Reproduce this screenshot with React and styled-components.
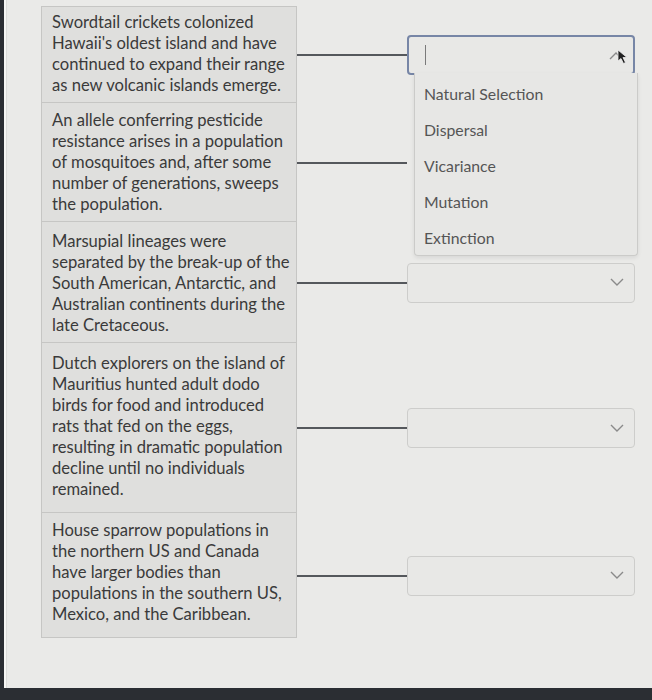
import React from 'react';
import styled, {createGlobalStyle} from 'styled-components';

const GlobalStyle = createGlobalStyle`
  html, body {
    margin: 0;
    padding: 0;
    background: #2b2e33;
  }
  body {
    font-family: Lato, "Open Sans", sans-serif;
  }
`

const Screen = styled.div`
  width: 652px;
  height: 700px;
  display: flex;
  flex-direction: column;
  overflow: hidden;
`

const Sheet = styled.div`
  flex: 1;
  background: #eaeae8;
  border-left: 2px solid #f6f6f4;
  margin-left: 4px;
  padding: 7px 0 0 35px;
  box-shadow: inset 1px 0 0 #dcdcda;
`

const Footer = styled.div`
  height: 12px;
  background: #2b2e33;
`

const Rows = styled.div`
  display: flex;
  flex-direction: column;
`

const Row = styled.div`
  display: flex;
  align-items: center;
  position: relative;
  z-index: ${p => p.$open ? 2 : 1};
`

const Card = styled.div`
  width: 256px;
  box-sizing: border-box;
  padding: ${p => p.$pad || '8px 6px 9px 10px'};
  background: #dfdfdd;
  border: 1px solid #c6c6c4;
  margin-top: -1px;
  color: #3a3a3a;
  font-size: 16.6px;
  line-height: 21px;
`

const Connector = styled.div`
  width: 110px;
  height: 2px;
  background: #55585c;
`

const SelectBox = styled.div`
  position: relative;
  width: 228px;
  height: 40px;
  box-sizing: border-box;
  border: ${p => p.$open ? '2px solid #7786a6' : '1px solid #cdcdcb'};
  border-radius: 4px;
  background: #e8e8e6;
  display: flex;
  align-items: center;
  justify-content: space-between;
  padding: 0 10px 0 16px;
`

const TextCursor = styled.span`
  display: block;
  width: 1px;
  height: 20px;
  background: #7a7a7a;
`

const Menu = styled.ul`
  position: absolute;
  top: 100%;
  left: 5px;
  right: -5px;
  margin: 0;
  padding: 2px 0 0;
  list-style: none;
  background: #e7e7e5;
  border: 1px solid #cbcbc9;
  border-top: none;
  border-radius: 0 0 4px 4px;
  box-shadow: 0 2px 4px rgba(0, 0, 0, 0.08);
`

const MenuItem = styled.li`
  height: 36px;
  display: flex;
  align-items: center;
  padding-left: 9px;
  font-size: 15.8px;
  color: #555;
`

const Pointer = styled.svg`
  position: absolute;
  right: 4px;
  top: 12px;
`

const statements = [
    {text: "Swordtail crickets colonized Hawaii's oldest island and have continued to expand their range as new volcanic islands emerge.", pad: '5px 6px 6px 10px'},
    {text: "An allele conferring pesticide resistance arises in a population of mosquitoes and, after some number of generations, sweeps the population.", pad: '7px 6px 6px 10px'},
    {text: "Marsupial lineages were separated by the break-up of the South American, Antarctic, and Australian continents during the late Cretaceous.", pad: '9px 6px 6px 10px'},
    {text: "Dutch explorers on the island of Mauritius hunted adult dodo birds for food and introduced rats that fed on the eggs, resulting in dramatic population decline until no individuals remained.", pad: '10px 6px 12px 10px'},
    {text: "House sparrow populations in the northern US and Canada have larger bodies than populations in the southern US, Mexico, and the Caribbean.", pad: '7px 6px 12px 10px'},
]

const options = ['Natural Selection', 'Dispersal', 'Vicariance', 'Mutation', 'Extinction']

function Chevron({up}) {
    return (
        <svg width="14" height="9" viewBox="0 0 14 9">
            <path d={up ? 'M1 8 L7 2 L13 8' : 'M1 1 L7 7 L13 1'} fill="none" stroke="#8a8a8a" strokeWidth="1.4"/>
        </svg>
    )
}

/* 매칭 문제 */
export default function App() {
    return (
        <Screen>
            <GlobalStyle/>
            <Sheet>
                <Rows>
                    {statements.map((s, i) => {
                        const open = i === 0
                        return (
                            <Row key={i} $open={open}>
                                <Card $pad={s.pad}>{s.text}</Card>
                                <Connector/>
                                {i !== 1 && (
                                    <SelectBox $open={open}>
                                        {open ? <TextCursor/> : <span/>}
                                        <Chevron up={open}/>
                                        {open && (
                                            <>
                                                <Pointer width="12" height="16" viewBox="0 0 12 16">
                                                    <path d="M1 1 L1 12 L4 9.5 L6.5 14.5 L8.5 13.5 L6 8.5 L10 8.5 Z" fill="#222" stroke="#eee" strokeWidth="0.8"/>
                                                </Pointer>
                                                <Menu>
                                                    {options.map(o => <MenuItem key={o}>{o}</MenuItem>)}
                                                </Menu>
                                            </>
                                        )}
                                    </SelectBox>
                                )}
                            </Row>
                        )
                    })}
                </Rows>
            </Sheet>
            <Footer/>
        </Screen>
    );
}
